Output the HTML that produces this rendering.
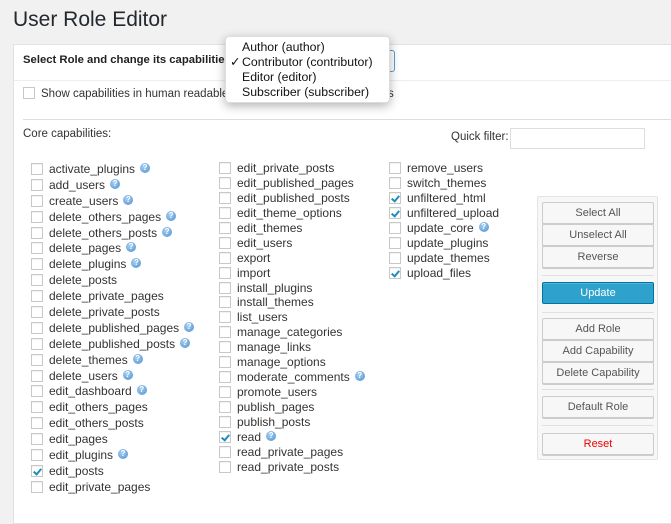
<!DOCTYPE html>
<html><head><meta charset="utf-8"><style>
*{margin:0;padding:0;box-sizing:border-box}
body{width:671px;height:508px;background:#f1f1f1;font-family:"Liberation Sans",sans-serif;color:#333;position:relative;overflow:hidden}
.abs{position:absolute}
h1{position:absolute;left:13px;top:8px;font-size:21px;font-weight:normal;color:#23282d}
.panel{position:absolute;left:13px;top:44px;width:670px;height:480px;background:#fff;border:1px solid #e2e2e2}
.col{position:absolute;font-size:12px;color:#333}
.row{position:relative;height:15.9px;line-height:15px;white-space:nowrap;padding-left:18px}
.cb{position:absolute;left:0;top:1px;width:12px;height:12px;border:1px solid #c8c8c8;background:#fff;box-shadow:inset 0 1px 1px rgba(0,0,0,.06)}
.cb.c::after{content:"";position:absolute;left:3px;top:1px;width:3px;height:6px;border:solid #1e8cbe;border-width:0 2px 2px 0;transform:rotate(40deg)}
.q{display:inline-block;width:10px;height:10px;border-radius:50%;background:radial-gradient(circle at 40% 35%,#a9d0f0,#4a90d0);color:#fff;font-size:8px;line-height:10px;text-align:center;font-weight:bold;vertical-align:3px;margin-left:5px}
.btns{position:absolute;left:537px;top:196px;width:121px;height:264px;background:#f7f7f7;border:1px solid #e3e3e3;border-radius:2px}
.b{position:absolute;left:4px;width:112px;height:22px;background:#f7f7f7;border:1px solid #ccc;border-radius:2px;font-size:11px;text-align:center;line-height:20px;color:#555;box-shadow:0 1px 0 #ccc}
.sep{position:absolute;left:4px;width:112px;height:1px;background:#e0e0e0}
</style></head><body>
<h1>User Role Editor</h1>
<div class="panel"></div>
<div class="abs" style="left:14px;top:80px;width:657px;height:1px;background:#eee"></div>
<div class="abs" style="left:23px;top:54px;font-size:11.3px;font-weight:bold;color:#222">Select Role and change its capabilities</div>
<div class="abs" style="left:350px;top:50px;width:45px;height:22px;border:1px solid #5b9dd9;border-left:none;border-radius:0 3px 3px 0;background:#fff"></div>
<div class="abs" style="left:23px;top:87px;width:12px;height:12px;border:1px solid #c8c8c8"></div>
<div class="abs" style="left:41px;top:88px;font-size:11.5px;color:#333">Show capabilities in human readable for</div>
<div class="abs" style="left:388px;top:88px;font-size:11.5px;color:#333">s</div>
<div class="abs" style="left:23px;top:119px;width:648px;height:1px;background:#ddd"></div>
<div class="abs" style="left:23px;top:128px;font-size:11.5px">Core capabilities:</div>
<div class="abs" style="left:451px;top:131px;font-size:11.5px">Quick filter:</div>
<div class="abs" style="left:510px;top:128px;width:135px;height:21px;border:1px solid #ddd;background:#fff"></div>
<div class="abs" style="left:225px;top:36px;width:165px;height:67px;background:#fff;border-radius:4px;box-shadow:0 3px 10px rgba(0,0,0,.3);border:1px solid #ddd;font-size:12.3px;color:#111;line-height:15px;padding:3px 0 0 16px">
<div>Author (author)</div><div style="position:relative"><span style="position:absolute;left:-12px">✓</span>Contributor (contributor)</div><div>Editor (editor)</div><div>Subscriber (subscriber)</div></div>

<div class="col" style="left:31px;top:162px">
<div class="row"><span class="cb"></span>activate_plugins<span class="q">?</span></div>
<div class="row"><span class="cb"></span>add_users<span class="q">?</span></div>
<div class="row"><span class="cb"></span>create_users<span class="q">?</span></div>
<div class="row"><span class="cb"></span>delete_others_pages<span class="q">?</span></div>
<div class="row"><span class="cb"></span>delete_others_posts<span class="q">?</span></div>
<div class="row"><span class="cb"></span>delete_pages<span class="q">?</span></div>
<div class="row"><span class="cb"></span>delete_plugins<span class="q">?</span></div>
<div class="row"><span class="cb"></span>delete_posts</div>
<div class="row"><span class="cb"></span>delete_private_pages</div>
<div class="row"><span class="cb"></span>delete_private_posts</div>
<div class="row"><span class="cb"></span>delete_published_pages<span class="q">?</span></div>
<div class="row"><span class="cb"></span>delete_published_posts<span class="q">?</span></div>
<div class="row"><span class="cb"></span>delete_themes<span class="q">?</span></div>
<div class="row"><span class="cb"></span>delete_users<span class="q">?</span></div>
<div class="row"><span class="cb"></span>edit_dashboard<span class="q">?</span></div>
<div class="row"><span class="cb"></span>edit_others_pages</div>
<div class="row"><span class="cb"></span>edit_others_posts</div>
<div class="row"><span class="cb"></span>edit_pages</div>
<div class="row"><span class="cb"></span>edit_plugins<span class="q">?</span></div>
<div class="row"><span class="cb c"></span>edit_posts</div>
<div class="row"><span class="cb"></span>edit_private_pages</div>
</div>

<div class="col" style="left:219px;top:161px">
<div class="row" style="height:14.95px"><span class="cb"></span>edit_private_posts</div>
<div class="row" style="height:14.95px"><span class="cb"></span>edit_published_pages</div>
<div class="row" style="height:14.95px"><span class="cb"></span>edit_published_posts</div>
<div class="row" style="height:14.95px"><span class="cb"></span>edit_theme_options</div>
<div class="row" style="height:14.95px"><span class="cb"></span>edit_themes</div>
<div class="row" style="height:14.95px"><span class="cb"></span>edit_users</div>
<div class="row" style="height:14.95px"><span class="cb"></span>export</div>
<div class="row" style="height:14.95px"><span class="cb"></span>import</div>
<div class="row" style="height:14.95px"><span class="cb"></span>install_plugins</div>
<div class="row" style="height:14.95px"><span class="cb"></span>install_themes</div>
<div class="row" style="height:14.95px"><span class="cb"></span>list_users</div>
<div class="row" style="height:14.95px"><span class="cb"></span>manage_categories</div>
<div class="row" style="height:14.95px"><span class="cb"></span>manage_links</div>
<div class="row" style="height:14.95px"><span class="cb"></span>manage_options</div>
<div class="row" style="height:14.95px"><span class="cb"></span>moderate_comments<span class="q">?</span></div>
<div class="row" style="height:14.95px"><span class="cb"></span>promote_users</div>
<div class="row" style="height:14.95px"><span class="cb"></span>publish_pages</div>
<div class="row" style="height:14.95px"><span class="cb"></span>publish_posts</div>
<div class="row" style="height:14.95px"><span class="cb c"></span>read<span class="q">?</span></div>
<div class="row" style="height:14.95px"><span class="cb"></span>read_private_pages</div>
<div class="row" style="height:14.95px"><span class="cb"></span>read_private_posts</div>
</div>

<div class="col" style="left:389px;top:161px">
<div class="row" style="height:15px"><span class="cb"></span>remove_users</div>
<div class="row" style="height:15px"><span class="cb"></span>switch_themes</div>
<div class="row" style="height:15px"><span class="cb c"></span>unfiltered_html</div>
<div class="row" style="height:15px"><span class="cb c"></span>unfiltered_upload</div>
<div class="row" style="height:15px"><span class="cb"></span>update_core<span class="q">?</span></div>
<div class="row" style="height:15px"><span class="cb"></span>update_plugins</div>
<div class="row" style="height:15px"><span class="cb"></span>update_themes</div>
<div class="row" style="height:15px"><span class="cb c"></span>upload_files</div>
</div>

<div class="btns">
<div class="b" style="top:5px">Select All</div>
<div class="b" style="top:27px">Unselect All</div>
<div class="b" style="top:49px">Reverse</div>
<div class="sep" style="top:78px"></div>
<div class="b" style="top:85px;background:#2ea2cc;border-color:#0074a2;color:#fff;box-shadow:inset 0 1px 0 rgba(120,200,230,.5)">Update</div>
<div class="sep" style="top:115px"></div>
<div class="b" style="top:121px">Add Role</div>
<div class="b" style="top:143px">Add Capability</div>
<div class="b" style="top:165px">Delete Capability</div>
<div class="sep" style="top:192px"></div>
<div class="b" style="top:199px">Default Role</div>
<div class="sep" style="top:228px"></div>
<div class="b" style="top:236px;color:#e00">Reset</div>
</div>
</body></html>
